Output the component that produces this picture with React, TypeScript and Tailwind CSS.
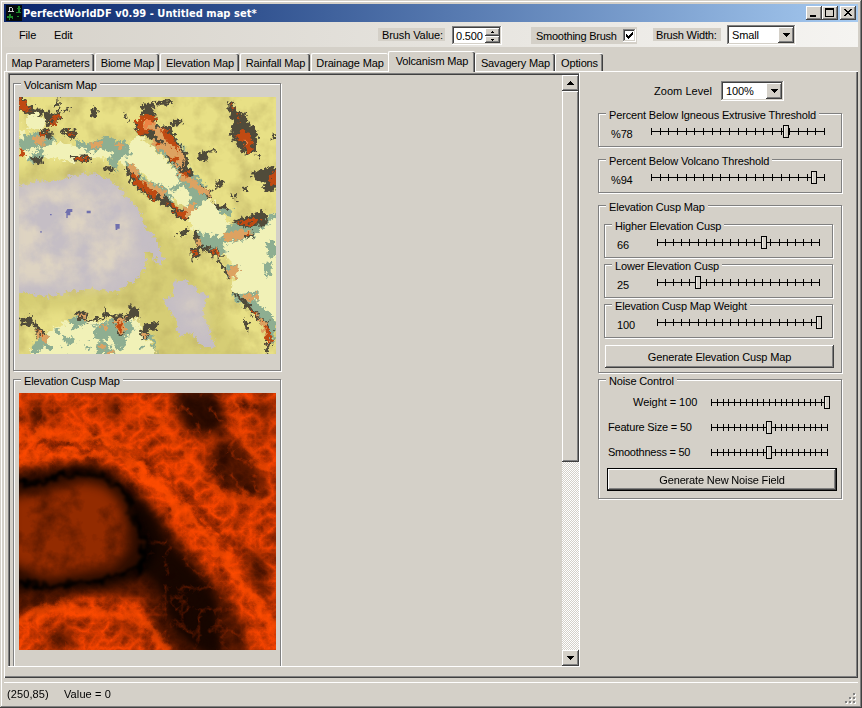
import React from "react";

const raised =
  "bg-[#d4d0c8] shadow-[inset_-1px_-1px_0_#404040,inset_1px_1px_0_#ffffff,inset_-2px_-2px_0_#808080]";
const sunken =
  "bg-white shadow-[inset_-1px_-1px_0_#ffffff,inset_1px_1px_0_#808080,inset_-2px_-2px_0_#d4d0c8,inset_2px_2px_0_#404040]";

function Group({
  title,
  className,
  titleClass = "",
  children,
}: {
  title: string;
  className: string;
  titleClass?: string;
  children?: React.ReactNode;
}) {
  return (
    <div
      className={
        "flex shrink-0 flex-col items-start border border-[#808080] shadow-[1px_1px_0_#fff,inset_1px_1px_0_#fff] " +
        className
      }
    >
      <div className={"-mt-[5px] ml-[7px] h-[13px] whitespace-nowrap bg-[#d4d0c8] px-[3px] leading-[13px] " + titleClass}>
        {title}
      </div>
      {children}
    </div>
  );
}

function Slider({ length, value }: { length: number; value: number }) {
  const ticks = Array.from({ length: 21 }, (_, i) => Math.round((i * length) / 20));
  const x = Math.round((length * value) / 100);
  return (
    <svg width={length + 9} height={13} className="block shrink-0" shapeRendering="crispEdges">
      <rect x={4} y={6} width={length} height={1} fill="#000" />
      {ticks.map((t) => (
        <rect key={t} x={4 + t} y={3} width={1} height={7} fill="#000" />
      ))}
      <rect x={x + 1.5} y={0.5} width={5} height={12} fill="#d4d0c8" stroke="#000" />
      <rect x={x + 2} y={1} width={1} height={11} fill="#eeebe4" />
    </svg>
  );
}

function SliderRow({ label, length, value }: { label: string; length: number; value: number }) {
  return (
    <div className="flex w-full items-start pl-3 pt-[3px]">
      <span className="mt-[3px] w-[36px]">{label}</span>
      <Slider length={length} value={value} />
    </div>
  );
}

function Arrow({ up = false, small = false }: { up?: boolean; small?: boolean }) {
  return (
    <svg
      width={small ? 3 : 7}
      height={small ? 2 : 4}
      viewBox="0 0 7 4"
      preserveAspectRatio="none"
      shapeRendering="crispEdges"
      className={up ? "rotate-180" : ""}
    >
      <path d="M0 0h7v1h-1v1h-1v1h-1v1h-1v-1h-1v-1h-1v-1h-1z" fill="#000" />
    </svg>
  );
}

function Combo({ text, className }: { text: string; className: string }) {
  return (
    <div className={"flex shrink-0 items-center justify-between p-[2px] " + sunken + " " + className}>
      <span className="pl-[3px] pt-px">{text}</span>
      <span className={"flex h-full w-4 items-center justify-center " + raised}>
        <Arrow />
      </span>
    </div>
  );
}

const PALE =
  "M27 120L45 125L50 160L80 170L110 140L150 165L230 175L290 150L340 180L360 160L385 135L420 165L470 210L510 260L545 300L580 310L620 350L640 380L660 400L700 420L770 380L798 365L840 360L840 700L798 690L760 680L715 645L665 600L680 530L640 490L590 460L545 410L525 350L460 310L420 270L380 235L345 225L310 205L250 205L180 215L110 205L60 215L27 190Z M100 735L160 697L290 695L385 685L392 735L425 765L455 830L50 830L60 780Z M75 65L110 90L105 115L60 120L40 90Z";

const LAVENDER =
  "M0 292L80 275L140 272L200 255L255 250L310 275L345 312L392 370L402 410L435 440L462 505L450 535L425 490L405 480L410 520L390 560L355 585L320 608L250 595L180 605L110 622L50 608L0 600Z M490 575L530 570L560 600L592 620L578 665L600 720L615 770L575 772L545 730L505 740L500 690L470 650L460 625L495 620Z";

const TEAL =
  "M27 150L65 130L110 125L140 150L115 170L85 172L110 195L90 220L50 212L70 195L48 180L30 195Z M195 150L240 160L290 140L345 155L362 195L330 205L320 245L292 215L310 185L275 175L235 190L200 170Z M418 100L475 110L528 180L535 230L590 290L600 320L550 360L520 375L530 340L545 325L520 290L490 308L485 290L510 280L500 245L470 205L425 165L445 145Z M348 215L380 230L400 265L470 295L500 350L475 345L430 325L385 275L345 240Z M615 345L670 360L665 378L630 370Z M560 425L600 435L640 440L650 405L700 400L750 395L798 365L798 380L765 410L720 445L640 460L650 490L620 500L575 470Z M765 455L798 450L798 505L775 500Z M760 520L785 515L785 550L765 560Z M670 610L740 605L740 640L770 660L798 690L790 760L765 725L750 690L710 650L675 635Z M60 792L75 760L95 735L115 735L105 770L80 792Z M175 685L225 680L230 700L205 710L180 700Z M165 745L190 738L195 755L170 765Z M250 710L300 690L360 690L375 720L340 735L345 770L320 770L300 740L280 755L255 745Z M262 760L290 755L300 775L325 792L260 792Z M395 725L430 735L440 792L420 750L400 750Z M640 530L690 525L675 565L650 560Z M670 85L705 80L715 105L685 110Z M130 720L155 715L140 735Z M225 765L245 770L235 782Z";

const DARK =
  "M20 15L40 22L55 40L75 55L105 58L118 72L155 65L150 92L130 105L115 112L105 75L70 68L50 72L27 60Z M143 22L150 40L145 65L140 62Z M90 118L125 123L125 145L90 135Z M155 122L200 118L195 148L165 142Z M65 198L100 203L92 225L68 215Z M182 198L245 196L245 212L205 220Z M245 55L264 60L255 84L244 76Z M342 65L348 65L356 90L350 95Z M395 40L425 42L440 75L437 105L480 108L502 150L532 190L535 235L550 245L545 265L515 262L505 235L470 205L465 165L440 165L415 142L385 135L370 100L400 80Z M420 33L460 32L488 36L488 42L455 44L420 40Z M485 92L520 86L510 105L488 108Z M655 30L672 40L680 65L710 72L712 95L740 120L745 155L730 195L700 190L675 155L660 130L668 100L655 60Z M788 130L798 130L798 150L788 150Z M565 195L585 182L615 175L618 182L595 190L588 212L570 212Z M720 250L770 235L810 222L810 300L765 305L760 275L730 270Z M622 275L645 268L635 295L625 292Z M700 290L714 290L712 306L702 306Z M283 228L315 232L305 250L288 244Z M345 230L370 240L390 260L430 300L470 320L500 355L542 355L532 390L508 388L470 345L420 325L380 295L350 255Z M570 285L605 300L602 325L575 310Z M610 340L655 352L655 360L625 356Z M660 308L680 314L676 322L664 320Z M665 395L720 375L760 362L772 375L765 405L700 412Z M550 425L565 430L572 465L630 480L640 500L620 500L560 475Z M540 475L570 480L567 505L545 512Z M500 430L540 415L540 425L505 440Z M610 492L640 525L664 565L655 565L630 525Z M700 430L730 427L725 442L702 448Z M665 605L700 622L740 670L780 705L787 760L773 795L765 760L765 720L740 690L708 655Z M702 685L718 695L715 728L703 715Z M28 683L68 678L75 700L112 730L100 750L80 740L70 705L32 702Z M280 645L295 672L355 675L355 642L388 655L385 675L350 690L320 685L345 735L320 732L310 685L280 680Z M196 665L232 665L232 690L205 690Z M228 692L285 680L285 686L232 698Z M390 725L410 698L445 696L440 722L415 722L412 745L395 748Z M160 60L185 50L182 58L162 66Z M743 192L752 192L752 208L743 205Z M673 325L684 332L680 340Z";

const ORANGE =
  "M65 138L105 140L100 165L75 162Z M190 203L235 203L220 212Z M240 160L278 155L275 172L250 175Z M308 155L345 165L330 178Z M425 112L462 115L522 190L525 235L500 230L470 190L425 165L425 150L470 165L440 140Z M360 222L382 228L385 265L465 300L460 325L415 290L375 260L355 240Z M505 245L545 260L570 290L600 298L598 318L570 310L540 285L515 270Z M512 365L540 340L555 335L555 355L530 385Z M560 440L575 465L560 470Z M640 432L680 420L725 425L700 445L650 455Z M600 475L635 485L630 500Z M648 540L688 525L682 560L660 568Z M700 612L740 615L735 632L708 634Z M75 720L115 735L105 762L88 745Z M203 674L227 672L224 692Z M265 760L285 763L280 785Z M312 688L345 685L345 730L320 725Z M395 732L412 728L405 750Z M275 705L295 706L285 725Z M715 655L765 695L785 740L775 775L760 720L740 680Z M700 145L725 150L715 180Z M378 88L435 80L435 115L415 130L385 125Z M295 785L310 780L312 792L298 792Z";

const RED =
  "M20 20L50 35L62 60L40 64L22 50Z M120 85L152 72L145 95L125 108Z M28 175L45 190L42 205L30 195Z M88 125L118 128L100 140Z M168 124L195 128L180 140Z M195 203L240 203L212 218Z M375 92L400 80L412 72L440 80L435 95L400 90L400 120L430 118L412 132L385 130Z M452 108L475 125L500 155L505 185L480 165L455 135Z M440 153L455 163L440 168Z M478 203L502 203L495 222Z M510 245L535 245L535 260L515 257Z M368 250L395 270L410 290L450 310L432 328L400 303L372 278Z M475 335L500 350L510 365L532 362L525 388L510 380L485 350Z M660 38L670 45L668 62Z M678 75L695 80L688 98Z M675 138L700 120L716 130L728 160L722 188L705 185L700 160L688 155Z M775 268L798 235L808 280L780 288Z M680 400L720 384L752 384L740 400L700 406Z M600 478L638 490L620 497Z M543 483L564 486L552 502Z M320 694L340 698L334 724L320 715Z M703 430L724 430L710 444Z M765 700L778 715L787 752L770 758Z M88 722L105 740L95 744Z M712 650L742 675L730 674Z";

function VolcanismMap() {
  return (
    <svg viewBox="27 21 771 771" className="ml-[5px] block h-[257px] w-[257px]">
      <defs>
        <filter id="edge" x="0" y="0" width="900" height="900" filterUnits="userSpaceOnUse" colorInterpolationFilters="sRGB">
          <feTurbulence type="fractalNoise" baseFrequency="0.08" numOctaves="3" seed="4" result="n" />
          <feDisplacementMap in="SourceGraphic" in2="n" scale="30" xChannelSelector="R" yChannelSelector="G" />
        </filter>
        <filter id="mottleDark" x="0" y="0" width="900" height="900" filterUnits="userSpaceOnUse" colorInterpolationFilters="sRGB">
          <feTurbulence type="fractalNoise" baseFrequency="0.018" numOctaves="4" seed="9" />
          <feColorMatrix values="0 0 0 0 0.72  0 0 0 0 0.67  0 0 0 0 0.38  0 0 0 2 -0.8" />
        </filter>
        <filter id="mottleBeige" x="0" y="0" width="900" height="900" filterUnits="userSpaceOnUse" colorInterpolationFilters="sRGB">
          <feGaussianBlur in="SourceGraphic" stdDeviation="22" result="mask" />
          <feTurbulence type="fractalNoise" baseFrequency="0.012" numOctaves="5" seed="21" />
          <feColorMatrix values="0 0 0 0 0.87  0 0 0 0 0.83  0 0 0 0 0.76  0 0 0 2.4 -0.65" result="b" />
          <feComposite in="b" in2="mask" operator="in" />
        </filter>
        <filter id="patches" x="0" y="0" width="900" height="900" filterUnits="userSpaceOnUse" colorInterpolationFilters="sRGB">
          <feTurbulence type="fractalNoise" baseFrequency="0.028" numOctaves="4" seed="12" />
          <feColorMatrix values="0 0 0 0 0.55  0 0 0 0 0.68  0 0 0 0 0.57  0 0 0 30 -19.4" result="b" />
          <feComposite in="b" in2="SourceGraphic" operator="in" />
        </filter>
        <filter id="soft" x="-10%" y="-10%" width="120%" height="120%">
          <feGaussianBlur stdDeviation="16" />
        </filter>
      </defs>
      <rect x="0" y="0" width="900" height="900" fill="#e8e086" />
      <path d="M0 245L250 225L340 250L430 390L490 450L560 530L650 680L720 820L430 820L380 650L250 650L0 670Z" fill="#d6cd74" filter="url(#soft)" />
      <rect x="0" y="0" width="900" height="900" filter="url(#mottleDark)" opacity="0.6" />
      <g filter="url(#edge)">
        <path d={LAVENDER} fill="#c5bec5" />
        <path d={PALE} fill="#f1f1b7" />
      </g>
      <path d="M0 310L200 270L300 290L360 360L380 440L375 520L310 580L170 590L0 590Z M500 600L570 640L590 740L545 710Z" filter="url(#mottleBeige)" fill="#fff" />
      <path d="M70 755L180 705L370 700L430 792L60 792Z" fill="#fff" filter="url(#patches)" />
      <g filter="url(#edge)">
        <path d={TEAL} fill="#8eae91" />
        <path d="M150 155L225 175L240 195L180 190L120 200L115 180Z M270 195L305 190L285 210Z M50 178L80 170L85 188L55 192Z" fill="#f1f1b7" />
        <path d={DARK} fill="#504b3a" />
        <path d={ORANGE} fill="#dda261" />
        <path d={RED} fill="#c04a12" />
        <path d="M405 90L430 90L425 112L405 110Z M400 115L412 112L408 122Z M700 145L712 160L705 165Z" fill="#ee8244" />
      </g>
      <path d="M172 357h15v9h-6v10h-8v8h-4v-15h-4z M230 362h12v8h-12z M316 402h13v14h-7v4h-5z M120 372h5v4h-5z M91 423h4v5h-4z" fill="#7070ae" />
    </svg>
  );
}

const CORE =
  "M-10 355L90 352L145 335L215 326L280 335L325 362L355 400L365 455L385 490L406 545L400 585L385 610L345 625L285 640L200 650L130 665L80 660L-10 630Z";

function CuspMap() {
  return (
    <svg viewBox="27 84 771 771" className="ml-[5px] block h-[257px] w-[257px]">
      <defs>
        <filter id="blur12" x="-20%" y="-20%" width="140%" height="140%" colorInterpolationFilters="sRGB">
          <feGaussianBlur stdDeviation="12" />
        </filter>
        <filter id="blur24" x="-50%" y="-50%" width="200%" height="200%" colorInterpolationFilters="sRGB">
          <feGaussianBlur stdDeviation="18" />
        </filter>
        <filter id="streak" x="-100" y="-50" width="1100" height="1100" filterUnits="userSpaceOnUse" colorInterpolationFilters="sRGB">
          <feGaussianBlur in="SourceGraphic" stdDeviation="7" result="s" />
          <feTurbulence type="fractalNoise" baseFrequency="0.025" numOctaves="4" seed="14" result="n" />
          <feDisplacementMap in="s" in2="n" scale="60" xChannelSelector="R" yChannelSelector="G" />
        </filter>
        <filter id="blur4" x="-100" y="0" width="1000" height="1000" filterUnits="userSpaceOnUse" colorInterpolationFilters="sRGB">
          <feTurbulence type="fractalNoise" baseFrequency="0.035" numOctaves="4" seed="2" result="n" />
          <feDisplacementMap in="SourceGraphic" in2="n" scale="50" xChannelSelector="R" yChannelSelector="G" />
          <feGaussianBlur stdDeviation="4" />
        </filter>
        <filter id="veins" x="0" y="0" width="900" height="900" filterUnits="userSpaceOnUse" colorInterpolationFilters="sRGB">
          <feTurbulence type="turbulence" baseFrequency="0.018 0.02" numOctaves="5" seed="7" />
          <feColorMatrix values="0 0 0 0 0.08  0 0 0 0 0.01  0 0 0 0 0  0 0 0 0.85 -0.1" />
        </filter>
        <filter id="web" x="0" y="0" width="900" height="900" filterUnits="userSpaceOnUse" colorInterpolationFilters="sRGB">
          <feGaussianBlur in="SourceGraphic" stdDeviation="20" result="mask" />
          <feTurbulence type="turbulence" baseFrequency="0.015" numOctaves="4" seed="31" />
          <feColorMatrix values="0 0 0 0 0.85  0 0 0 0 0.23  0 0 0 0 0  0 0 0 -3.5 0.8" result="w" />
          <feComposite in="w" in2="mask" operator="in" />
        </filter>
        <filter id="cloud" x="0" y="0" width="900" height="900" filterUnits="userSpaceOnUse" colorInterpolationFilters="sRGB">
          <feGaussianBlur in="SourceGraphic" stdDeviation="10" result="mask" />
          <feTurbulence type="fractalNoise" baseFrequency="0.014" numOctaves="5" seed="3" />
          <feColorMatrix values="0 0 0 0 0.1  0 0 0 0 0.02  0 0 0 0 0  0 0 0 1.6 -0.65" result="c" />
          <feComposite in="c" in2="mask" operator="in" />
        </filter>
      </defs>
      <rect x="0" y="0" width="900" height="900" fill="#f44400" />
      <g filter="url(#blur24)" fill="#000">
        <path d="M490 70L620 70L650 170L640 210L540 210L500 160Z" opacity="0.8" />
        <path d="M630 220L690 220L760 330L760 410L680 400L590 330L590 260Z" opacity="0.65" />
        <path d="M50 110L110 110L110 180L60 190Z M280 100L330 100L340 160L290 160Z M730 110L790 110L790 160L740 160Z M730 200L780 190L780 220L740 230Z" opacity="0.55" />
        <path d="M700 560L760 560L780 720L720 660Z M120 790L190 790L190 855L100 855Z M310 780L400 780L380 820Z" opacity="0.55" />
      </g>
      <g filter="url(#blur12)">
        <path d="M-10 310L150 295L260 290L330 330L400 390L470 470L530 550L590 620L650 690L700 780L720 890L500 890L430 800L400 700L350 700L220 690L100 735L-10 740Z" fill="#000" opacity="0.62" />
        <path d="M370 390L430 440L480 540L560 620L620 700L640 890L560 855L490 800L450 680L400 620Z" fill="#000" opacity="0.75" />
        <path d="M-10 345L100 330L220 295L300 320L370 390L440 560L400 640L280 670L-10 680Z" fill="#000" opacity="0.75" />
      </g>
      <rect x="0" y="0" width="900" height="900" filter="url(#veins)" />
      <g fill="none" filter="url(#streak)" strokeLinejoin="round">
        <path d="M0 215L150 205L270 225L350 260L410 330L500 410L590 510L670 620L740 720L800 790" stroke="#ff4c00" strokeWidth="30" opacity="0.75" />
        <path d="M0 275L200 268L300 265L370 310L450 380L520 470" stroke="#ff4c00" strokeWidth="16" opacity="0.75" />
        <path d="M400 150L480 210L560 310L640 400L800 420 M670 80L700 240L800 330 M350 140L440 130L500 240" stroke="#ff4c00" strokeWidth="18" opacity="0.65" />
        <path d="M0 770L150 730L260 750L370 740L440 820L480 870" stroke="#ff4c00" strokeWidth="30" opacity="0.6" />
        <path d="M80 240L280 242L370 270L450 320L540 400L600 480L690 570" stroke="#300a00" strokeWidth="9" opacity="0.6" />
      </g>
      <path d="M440 430L560 470L700 620L800 700L820 855L400 855L420 640Z" fill="#fff" filter="url(#web)" opacity="0.45" />
      <path d="M0 84L798 84L798 540L700 560L480 330L330 240L0 260Z M0 740L400 720L440 855L0 855Z" fill="#ff5000" filter="url(#web)" opacity="0.7" />
      <g filter="url(#blur4)">
        <path d={CORE} fill="#2a0c00" stroke="#000" strokeWidth="14" />
      </g>
      <path d="M0 400L130 375L220 350L285 365L330 410L350 480L355 550L310 605L220 620L110 640L0 590Z" fill="#932b00" filter="url(#blur24)" />
      <path d="M0 380L220 355L310 385L350 480L370 550L310 605L100 635L0 610Z" fill="#fff" filter="url(#cloud)" opacity="0.7" />
    </svg>
  );
}

function Tab({ text, className }: { text: string; className: string }) {
  return (
    <div
      className={
        "flex h-[18px] shrink-0 items-center justify-center whitespace-nowrap rounded-t-[2px] border-l border-t border-white pt-px shadow-[inset_-1px_0_0_#404040,inset_-2px_0_0_#808080] " +
        className
      }
    >
      {text}
    </div>
  );
}

function TitleButton({ children }: { children: React.ReactNode }) {
  return (
    <div className={"h-[14px] w-4 " + raised}>
      <svg width="16" height="14" shapeRendering="crispEdges" className="block">
        {children}
      </svg>
    </div>
  );
}

export default function App() {
  return (
    <div className="flex h-[708px] w-[862px] flex-col overflow-hidden bg-[#d4d0c8] pl-1 pr-[4px] pt-1 font-['Liberation_Sans',Arial,sans-serif] text-[11px] leading-[13px] tracking-[-0.15px] text-black shadow-[inset_-1px_-1px_0_#404040,inset_1px_1px_0_#d4d0c8,inset_-2px_-2px_0_#808080,inset_2px_2px_0_#ffffff]">
      <div className="flex h-[18px] shrink-0 items-center bg-linear-to-r from-[#0a246a] to-[#a6caf0] pr-[2px]">
        <svg width="16" height="16" className="ml-[2px] shrink-0" shapeRendering="crispEdges">
          <rect width="16" height="16" fill="#050a0c" />
          <path d="M3 2h3v1h1v3h1v1h-6v-1h1v-3h0z" fill="#c8c8c8" />
          <rect x="4" y="3" width="2" height="3" fill="#050a0c" />
          <path d="M12 1h2v2h1v1h-4v-1h1z M12 4h2v3h1v1h-5v-1h2z M3 9h2v2h2v3h-1v-1h-2v2h-1v-2h-2v-2h2z M11 11h2v1h-2z" fill="#1f8a2a" />
        </svg>
        <span className="ml-[1px] grow whitespace-nowrap font-['DejaVu_Sans_Condensed','DejaVu_Sans',sans-serif] font-bold tracking-[0.04px] text-white">
          PerfectWorldDF v0.99 - Untitled map set*
        </span>
        <TitleButton>
          <rect x="4" y="9" width="6" height="2" />
        </TitleButton>
        <TitleButton>
          <path d="M3 2h9v9h-9z M4 4v6h7v-6z" fillRule="evenodd" />
        </TitleButton>
        <div className="w-[2px]" />
        <TitleButton>
          <path d="M4 3h2v1h1v1h2v-1h1v-1h2v1h-1v1h-1v1h-1v1h1v1h1v1h1v1h-2v-1h-1v-1h-2v1h-1v1h-2v-1h1v-1h1v-1h1v-1h-1v-1h-1v-1h-1z" />
        </TitleButton>
      </div>

      <div className="flex h-[25px] shrink-0 items-start bg-linear-to-r from-[#d6d2ca] to-[#f5f4f1] whitespace-nowrap">
        <span className="ml-[15px] mt-[7px] w-[35px]">File</span>
        <span className="mt-[7px] w-[324px]">Edit</span>
        <span className="mt-[6px] h-[13px] w-[67px] bg-[#d4d0c8] pl-1 pt-px leading-[12px] tracking-[-0.1px]">Brush Value:</span>
        <div className={"ml-[7px] mt-[4px] flex h-[19px] w-[50px] items-center p-[2px] " + sunken}>
          <span className="w-[31px] pl-[2px] pt-[2px]">0.500</span>
          <span className="flex h-full w-[15px] flex-col">
            <span className={"flex h-[8px] items-center justify-center " + raised}>
              <Arrow up small />
            </span>
            <span className={"flex h-[7px] items-center justify-center " + raised}>
              <Arrow small />
            </span>
          </span>
        </div>
        <div className="ml-[29px] mt-[5px] flex h-[17px] w-[106px] items-center bg-[#d4d0c8] pl-[5px]">
          <span className="w-[87px] pt-px tracking-[-0.25px]">Smoothing Brush</span>
          <span className={"-mt-px flex h-[13px] w-[13px] items-center justify-center " + sunken}>
            <svg width="7" height="7" shapeRendering="crispEdges">
              <path d="M0 2h1v1h1v1h1v-1h1v-1h1v-1h1v-1h1v3h-1v1h-1v1h-1v1h-1v1h-1v-1h-1v-1h-1z" />
            </svg>
          </span>
        </div>
        <span className="ml-4 mt-[6px] h-[13px] w-[68px] bg-[#d4d0c8] pl-[3px] pt-px leading-[12px] tracking-[-0.2px]">Brush Width:</span>
        <Combo text="Small" className="ml-[6px] mt-[3px] h-[20px] w-[69px]" />
      </div>

      <div className="flex h-6 shrink-0 items-end pl-[2px]">
        <Tab text="Map Parameters" className="w-[88px] tracking-[-0.25px]" />
        <Tab text="Biome Map" className="ml-px w-[64px] tracking-[-0.25px]" />
        <Tab text="Elevation Map" className="ml-px w-[79px]" />
        <Tab text="Rainfall Map" className="ml-px w-[70px]" />
        <Tab text="Drainage Map" className="ml-px w-[77px] shadow-none" />
        <Tab text="Volcanism Map" className="z-10 -mb-px h-[21px] w-[87px] bg-[#d4d0c8] pb-[2px]" />
        <Tab text="Savagery Map" className="w-[80px]" />
        <Tab text="Options" className="w-[48px]" />
      </div>

      <div className="flex h-[607px] shrink-0 items-start border-l border-t border-white shadow-[inset_-1px_-1px_0_#404040,inset_-2px_-2px_0_#808080]">
        <div className="ml-[3px] mt-px flex h-[594px] w-[572px] shrink-0 justify-between p-[2px] pb-px pr-px shadow-[inset_-1px_-1px_0_#ffffff,inset_1px_1px_0_#808080,inset_2px_2px_0_#404040]">
          <div className="ml-[3px] flex h-[591px] flex-col overflow-hidden pr-px pt-[8px]">
            <Group title="Volcanism Map" className="h-[288px] w-[268px]">
              <div className="h-[5px]" />
              <VolcanismMap />
            </Group>
            <Group title="Elevation Cusp Map" className="mt-[8px] h-[300px] w-[268px]">
              <div className="h-[5px]" />
              <CuspMap />
            </Group>
          </div>
          <div className="flex h-[591px] w-[17px] flex-col bg-[repeating-conic-gradient(#ffffff_0_25%,#d4d0c8_0_50%)] bg-size-[2px_2px]">
            <div className={"flex h-4 shrink-0 items-center justify-center " + raised}>
              <Arrow up />
            </div>
            <div className={"h-[371px] shrink-0 " + raised} />
            <div className="grow" />
            <div className={"flex h-4 shrink-0 items-center justify-center " + raised}>
              <Arrow />
            </div>
          </div>
        </div>

        <div className="ml-[18px] flex w-[245px] flex-col">
          <div className="mt-[9px] flex h-5 items-center">
            <span className="ml-[56px] w-[67px] tracking-[0.05px]">Zoom Level</span>
            <Combo text="100%" className="h-5 w-[63px]" />
          </div>
          <Group title="Percent Below Igneous Extrusive Threshold" className="mt-[12px] h-[34px] w-[244px]">
            <SliderRow label="%78" length={173} value={78} />
          </Group>
          <Group title="Percent Below Volcano Threshold" className="mt-[12px] h-[34px] w-[244px]">
            <SliderRow label="%94" length={173} value={94} />
          </Group>
          <Group title="Elevation Cusp Map" className="mt-[12px] h-[168px] w-[244px]">
            <Group title="Higher Elevation Cusp" className="ml-[5px] mt-[10px] h-[34px] w-[229px]">
              <SliderRow label="66" length={162} value={66} />
            </Group>
            <Group title="Lower Elevation Cusp" className="ml-[5px] mt-[6px] h-[34px] w-[229px]">
              <SliderRow label="25" length={162} value={25} />
            </Group>
            <Group title="Elevation Cusp Map Weight" className="ml-[5px] mt-[6px] h-[34px] w-[229px]">
              <SliderRow label="100" length={162} value={100} />
            </Group>
            <div className={"ml-[6px] mt-[7px] flex h-[23px] w-[229px] items-center justify-center pt-px " + raised}>
              Generate Elevation Cusp Map
            </div>
          </Group>
          <Group title="Noise Control" className="mt-[6px] h-[120px] w-[244px]">
            <div className="mt-[8px] flex h-[13px] items-center">
              <span className="w-[108px] pl-[34px] tracking-[-0.05px]">Weight = 100</span>
              <Slider length={116} value={100} />
            </div>
            <div className="mt-[12px] flex h-[13px] items-center">
              <span className="w-[108px] pl-[9px] tracking-[-0.2px]">Feature Size = 50</span>
              <Slider length={116} value={50} />
            </div>
            <div className="mt-[12px] flex h-[13px] items-center">
              <span className="w-[108px] pl-[9px] tracking-[-0.25px]">Smoothness = 50</span>
              <Slider length={116} value={50} />
            </div>
            <div className="ml-[8px] mt-[9px] flex h-[23px] w-[230px] border border-black">
              <div className={"flex grow items-center justify-center pt-px " + raised}>Generate New Noise Field</div>
            </div>
          </Group>
        </div>
      </div>

      <div className="mt-[4px] flex h-[24px] shrink-0 items-center justify-between border-t border-white pl-[3px]">
        <div className="flex tracking-[0.1px]">
          <span className="w-[57px]">(250,85)</span>
          <span>Value = 0</span>
        </div>
        <svg width="12" height="12" className="mr-px mt-2" shapeRendering="crispEdges">
          <path d="M9 1h2v2h-2z M5 5h2v2h-2z M9 5h2v2h-2z M1 9h2v2h-2z M5 9h2v2h-2z M9 9h2v2h-2z" fill="#fff" />
          <path d="M8 0h2v2h-2z M4 4h2v2h-2z M8 4h2v2h-2z M0 8h2v2h-2z M4 8h2v2h-2z M8 8h2v2h-2z" fill="#808080" />
        </svg>
      </div>
    </div>
  );
}
